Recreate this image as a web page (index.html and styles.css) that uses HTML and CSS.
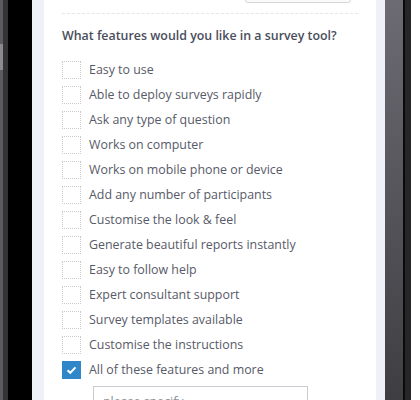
FILE: index.html
```html
<!DOCTYPE html>
<html>
<head>
<meta charset="utf-8">
<link rel="stylesheet" href="styles.css">
</head>
<body>
<div class="device">
  <div class="edge-left"><div class="side-btn"></div></div>
  <div class="bezel-dark"></div>
  <div class="bezel-black"></div>
  <div class="screen">
    <div class="card">
      <div class="top-row"><div class="top-btn"></div></div>
      <div class="divider"></div>
      <h2 class="question">What features would you like in a survey tool?</h2>
      <ul class="options">
        <li class="option"><span class="box"></span><span class="label">Easy to use</span></li>
        <li class="option"><span class="box"></span><span class="label">Able to deploy surveys rapidly</span></li>
        <li class="option"><span class="box"></span><span class="label">Ask any type of question</span></li>
        <li class="option"><span class="box"></span><span class="label">Works on computer</span></li>
        <li class="option"><span class="box"></span><span class="label">Works on mobile phone or device</span></li>
        <li class="option"><span class="box"></span><span class="label">Add any number of participants</span></li>
        <li class="option"><span class="box"></span><span class="label">Customise the look &amp; feel</span></li>
        <li class="option"><span class="box"></span><span class="label">Generate beautiful reports instantly</span></li>
        <li class="option"><span class="box"></span><span class="label">Easy to follow help</span></li>
        <li class="option"><span class="box"></span><span class="label">Expert consultant support</span></li>
        <li class="option"><span class="box"></span><span class="label">Survey templates available</span></li>
        <li class="option"><span class="box"></span><span class="label">Customise the instructions</span></li>
        <li class="option"><span class="box checked"><svg viewBox="0 0 19 18" width="19" height="18"><path d="M5.5 9.2 L8.3 11.8 L13.5 6.4" fill="none" stroke="#fff" stroke-width="2"/></svg></span><span class="label">All of these features and more</span></li>
      </ul>
      <div class="specify"><input class="specify-input" type="text" placeholder="please specify"></div>
    </div>
  </div>
  <div class="bezel-right"></div>
  <div class="bezel-right-black"></div>
  <div class="bezel-right-dark"></div>
  <div class="outside"></div>
</div>
</body>
</html>
```

FILE: styles.css
```css
html, body {
  margin: 0;
  padding: 0;
  background: #ffffff;
  overflow: hidden;
}
.device {
  display: flex;
  height: 400px;
  width: 420px;
  overflow: hidden;
}
.edge-left {
  width: 3px;
  background: #5c5c5e;
  flex: none;
}
.side-btn {
  margin-top: 44px;
  height: 26px;
  background: #8a8a90;
}
.bezel-dark {
  width: 5px;
  background: #333335;
  flex: none;
}
.bezel-black {
  width: 24px;
  background: #000000;
  flex: none;
}
.screen {
  width: 353px;
  flex: none;
  background: #eef2f8;
  padding: 0 9px 0 12px;
  box-sizing: border-box;
}
.card {
  background: #ffffff;
  height: 100%;
  padding: 0 18px;
  font-family: "Open Sans", "Liberation Sans", sans-serif;
  color: #545866;
}
.top-row {
  display: flex;
  justify-content: flex-end;
  padding-right: 7px;
}
.top-btn {
  width: 104px;
  height: 30px;
  margin-top: -29px;
  border: 1px solid #d6d6d6;
  border-radius: 3px;
  background: #fafafa;
}
.divider {
  margin-top: 10px;
  border-top: 1px dashed #e6e6e6;
}
.question {
  margin: 13px 0 0;
  font-size: 12.4px;
  line-height: 18px;
  font-weight: 600;
  color: #4a4e5c;
}
.options {
  list-style: none;
  margin: 16px 0 0;
  padding: 0;
}
.option {
  display: flex;
  align-items: center;
  height: 18px;
  margin-bottom: 7px;
}
.box {
  width: 19px;
  height: 18px;
  box-sizing: border-box;
  border: 1px dotted #cacaca;
  flex: none;
  display: flex;
}
.box.checked {
  border: none;
  background: #2f87c9;
}
.label {
  margin-left: 8px;
  font-size: 12.4px;
  line-height: 18px;
  color: #575a68;
}
.specify {
  padding-left: 31px;
  margin-top: 4px;
}
.specify-input {
  width: 215px;
  height: 30px;
  box-sizing: border-box;
  border: 1px solid #c9ccd3;
  padding: 0 0 0 9px;
  font-family: "Open Sans", "Liberation Sans", sans-serif;
  font-size: 12.4px;
  margin: 0;
  outline: none;
}
.specify-input::placeholder {
  color: #8a8d96;
}
.bezel-right {
  width: 18px;
  flex: none;
  background: linear-gradient(to bottom, #6c6a72 0%, #5a5960 40%, #3e3e42 100%);
}
.bezel-right-black {
  width: 2px;
  flex: none;
  background: #0a0a0a;
}
.bezel-right-dark {
  width: 6px;
  flex: none;
  background: #262628;
}
.outside {
  flex: 1;
  background: #ffffff;
}
```
